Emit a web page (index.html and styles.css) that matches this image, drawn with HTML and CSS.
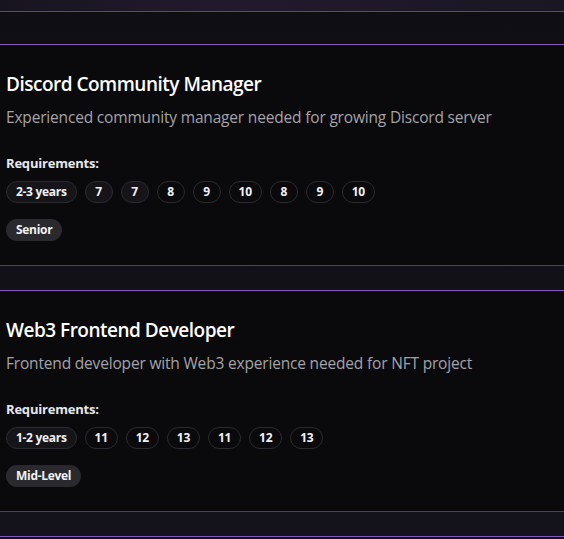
FILE: index.html
```html
<!DOCTYPE html>
<html lang="en">
<head>
    <meta charset="UTF-8">
    <meta name="viewport" content="width=device-width, initial-scale=1.0">
    <title>Job Listings</title>
    <link rel="stylesheet" href="styles.css">
</head>
<body>

    <div class="job-list">
        <!-- previous card, only its bottom edge shows -->
        <div class="job-card job-card--peek"></div>

        <div class="job-card">
            <h2 class="job-title">Discord Community Manager</h2>
            <p class="job-desc">Experienced community manager needed for growing Discord server</p>
            <h4 class="req-label">Requirements:</h4>
            <div class="chips">
                <span class="chip chip--filled">2-3 years</span>
                <span class="chip chip--filled">7</span>
                <span class="chip chip--filled">7</span>
                <span class="chip">8</span>
                <span class="chip">9</span>
                <span class="chip">10</span>
                <span class="chip">8</span>
                <span class="chip">9</span>
                <span class="chip">10</span>
            </div>
            <span class="level">Senior</span>
        </div>

        <div class="job-card">
            <h2 class="job-title">Web3 Frontend Developer</h2>
            <p class="job-desc">Frontend developer with Web3 experience needed for NFT project</p>
            <h4 class="req-label">Requirements:</h4>
            <div class="chips">
                <span class="chip chip--filled">1-2 years</span>
                <span class="chip">11</span>
                <span class="chip">12</span>
                <span class="chip">13</span>
                <span class="chip">11</span>
                <span class="chip">12</span>
                <span class="chip">13</span>
            </div>
            <span class="level">Mid-Level</span>
        </div>

        <div class="job-card job-card--next"></div>
    </div>

</body>
</html>
```

FILE: styles.css
```css
/* page */
html, body {
    height: 100%;
    overflow: hidden;
}

body {
    margin: 0;
    background: linear-gradient(180deg, #0e0e13, #14131b);
    font-family: 'Open Sans', 'Noto Sans', sans-serif;
    color: #fff;
}

.job-list {
    display: flex;
    flex-direction: column;
    gap: 24px;
}

/* cards */
.job-card {
    display: flex;
    flex-direction: column;
    align-items: flex-start;
    background-color: #0a0a0c;
    border-top: 1px solid #5d3c8c;
    border-bottom: 1px solid #4d4060;
    padding: 25px 6px 24px;
}

.job-card + .job-card {
    border-top-color: #8458c0;
}

.job-card--peek {
    height: 12px;
    padding: 0;
    border-top: none;
    margin-bottom: 8px;
    background: linear-gradient(90deg, #18141f, #211a2d 40%, #1a1622);
    border-bottom-color: #5a4a6e;
    box-sizing: border-box;
}

.job-card--next {
    height: 1px;
    padding: 0;
    border-bottom: none;
    background: #120e18;
}

.job-title {
    margin: 0;
    font-size: 19px;
    font-weight: 600;
    line-height: 28px;
    letter-spacing: -0.5px;
}

.job-desc {
    margin: 8px 0 0;
    font-size: 15.5px;
    line-height: 22px;
    color: #a3a3aa;
    letter-spacing: -0.18px;
}

.req-label {
    margin: 26px 0 0;
    font-size: 13px;
    font-weight: 700;
    line-height: 18px;
    color: #e8e8ec;
    letter-spacing: -0.2px;
}

/* requirement chips */
.chips {
    display: flex;
    flex-wrap: wrap;
    gap: 8px;
    margin-top: 9px;
}

.chip {
    box-sizing: border-box;
    min-width: 28px;
    height: 22px;
    line-height: 20px;
    padding: 0 9px;
    border: 1px solid #2a2a30;
    border-radius: 11px;
    font-size: 12px;
    font-weight: 700;
    color: #f2f2f4;
    text-align: center;
    letter-spacing: -0.3px;
}

.chip--filled {
    background-color: #151519;
}

.level {
    margin-top: 16px;
    height: 22px;
    line-height: 22px;
    padding: 0 10px;
    border-radius: 11px;
    background-color: #2a2a2e;
    font-size: 12px;
    font-weight: 700;
    color: #f2f2f4;
    letter-spacing: -0.3px;
}
```
